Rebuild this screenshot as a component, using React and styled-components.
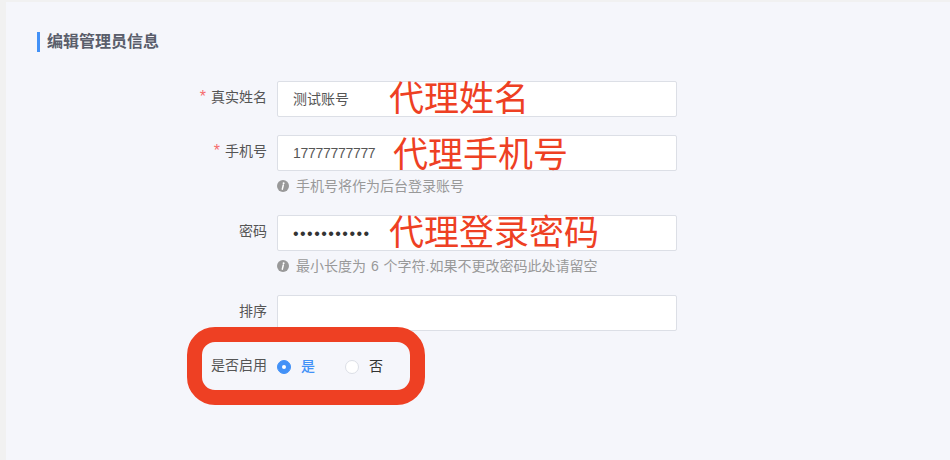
import React from 'react';
import styled, { createGlobalStyle } from 'styled-components';

const GlobalStyle = createGlobalStyle`
  html, body {
    margin: 0;
    padding: 0;
    background: #f1f1f1;
    font-family: "Liberation Sans", "Noto Sans CJK SC", sans-serif;
  }
`;

const Panel = styled.div`
  position: relative;
  width: 944px;
  height: 458px;
  margin: 2px 0 0 6px;
  padding: 30px 0 0 31px;
  box-sizing: border-box;
  background: #f5f6fb;
  overflow: hidden;
`;

const Title = styled.h2`
  height: 20px;
  margin: 0 0 29px;
  padding-left: 7px;
  border-left: 3px solid #4291f7;
  color: #5a5e6b;
  font-size: 16px;
  line-height: 20px;
  font-weight: 700;
`;

const Field = styled.div`
  display: grid;
  grid-template-columns: 230px 400px;
  column-gap: 10px;
  margin-bottom: ${(p) => p.$gap}px;
`;

const Label = styled.label`
  height: 32px;
  color: #555;
  font-size: 14px;
  line-height: 32px;
  text-align: right;
`;

const Star = styled.span`
  margin-right: 5px;
  color: #f56c6c;
  font-size: 16px;
`;

const Input = styled.div`
  height: 36px;
  padding-left: 15px;
  box-sizing: border-box;
  border: 1px solid #dcdfe6;
  border-radius: 2px;
  background: #fff;
  color: #555;
  font-size: 14px;
  line-height: 35px;
  letter-spacing: ${(p) => (p.$digits ? '-0.3px' : '0')};
`;

const Dots = styled.span`
  color: #333;
  font-size: 16px;
  letter-spacing: 1.45px;
`;

const Help = styled.div`
  display: flex;
  align-items: center;
  grid-column: 2;
  gap: 7px;
  height: 28px;
  margin-bottom: 2px;
  color: #999;
  font-size: 14px;
  word-spacing: 1px;
`;

const InfoDot = styled.svg`
  width: 12px;
  height: 12px;
  flex: none;
  margin-top: 1px;
`;

const Radios = styled.div`
  display: flex;
  align-items: center;
  height: 32px;
  margin-top: 2px;
  font-size: 14px;
`;

const Radio = styled.span`
  display: flex;
  align-items: center;
  width: 68px;
  gap: 10px;
  line-height: 14px;
  color: ${(p) => (p.$on ? '#4291f7' : '#333')};
  font-weight: ${(p) => (p.$on ? 500 : 400)};
`;

const RadioText = styled.span`
  margin-top: -3px;
`;

const RadioMark = styled.i`
  width: 14px;
  height: 14px;
  box-sizing: border-box;
  border-radius: 50%;
  border: 1px solid ${(p) => (p.$on ? '#4291f7' : '#dcdfe6')};
  background: ${(p) => (p.$on ? '#4291f7' : '#fff')};
  display: flex;
  align-items: center;
  justify-content: center;
  &::after {
    content: '';
    width: 4px;
    height: 4px;
    border-radius: 50%;
    background: ${(p) => (p.$on ? '#fff' : 'transparent')};
  }
`;

const Note = styled.span`
  position: absolute;
  left: ${(p) => p.$x}px;
  top: ${(p) => p.$y}px;
  color: #ee4023;
  font-size: 35px;
  line-height: 40px;
  white-space: nowrap;
`;

const Ring = styled.div`
  position: absolute;
  left: 181px;
  top: 325px;
  width: 238px;
  height: 78px;
  box-sizing: border-box;
  border: 15px solid #ee4023;
  border-radius: 28px;
  pointer-events: none;
`;

const InfoIcon = () => (
  <InfoDot viewBox="0 0 12 12">
    <circle cx="6" cy="6" r="6" fill="#999" />
    <circle cx="6.6" cy="3.2" r="1" fill="#fff" />
    <path d="M6.3 5 5.3 9.2" stroke="#fff" strokeWidth="1.5" strokeLinecap="round" />
  </InfoDot>
);

export default function App() {
  return (
    <>
      <GlobalStyle />
      <Panel>
        <Title>编辑管理员信息</Title>

        <Field $gap={18}>
          <Label><Star>*</Star>真实姓名</Label>
          <Input>测试账号</Input>
        </Field>

        <Field $gap={14}>
          <Label><Star>*</Star>手机号</Label>
          <Input $digits>17777777777</Input>
          <Help><InfoIcon />手机号将作为后台登录账号</Help>
        </Field>

        <Field $gap={14}>
          <Label>密码</Label>
          <Input><Dots>•••••••••••</Dots></Input>
          <Help><InfoIcon />最小长度为 6 个字符.如果不更改密码此处请留空</Help>
        </Field>

        <Field $gap={18}>
          <Label>排序</Label>
          <Input />
        </Field>

        <Field $gap={0}>
          <Label>是否启用</Label>
          <Radios>
            <Radio $on><RadioMark $on /><RadioText>是</RadioText></Radio>
            <Radio><RadioMark /><RadioText>否</RadioText></Radio>
          </Radios>
        </Field>

        <Note $x={383} $y={77}>代理姓名</Note>
        <Note $x={387} $y={133}>代理手机号</Note>
        <Note $x={383} $y={211}>代理登录密码</Note>
        <Ring />
      </Panel>
    </>
  );
}
